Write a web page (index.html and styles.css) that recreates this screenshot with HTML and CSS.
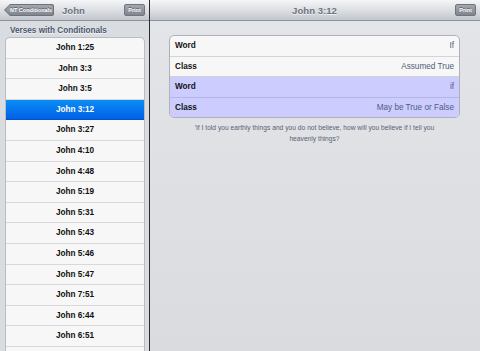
FILE: index.html
```html
<!DOCTYPE html>
<html lang="en">
<head>
    <meta charset="UTF-8">
    <meta name="viewport" content="width=device-width, initial-scale=1.0">
    <title>John 3:12 - Conditionals</title>
    <link rel="stylesheet" href="styles.css">
</head>
<body>
    <div class="split">
        <aside class="master">
            <header class="navbar">
                <div class="back-btn"><span class="back-fill">NT Conditionals</span></div>
                <h2 class="nav-title">John</h2>
                <button class="bar-btn">Print</button>
            </header>
            <div class="master-body">
                <h3 class="section-title">Verses with Conditionals</h3>
                <ul class="verse-list">
                    <li>John 1:25</li>
                    <li>John 3:3</li>
                    <li>John 3:5</li>
                    <li class="selected">John 3:12</li>
                    <li>John 3:27</li>
                    <li>John 4:10</li>
                    <li>John 4:48</li>
                    <li>John 5:19</li>
                    <li>John 5:31</li>
                    <li>John 5:43</li>
                    <li>John 5:46</li>
                    <li>John 5:47</li>
                    <li>John 7:51</li>
                    <li>John 6:44</li>
                    <li>John 6:51</li>
                    <li></li>
                </ul>
            </div>
        </aside>
        <main class="detail">
            <header class="navbar navbar-detail">
                <span class="nav-spacer"></span>
                <h1 class="nav-title">John 3:12</h1>
                <button class="bar-btn">Print</button>
            </header>
            <div class="detail-body">
                <div class="info-table">
                    <div class="info-row"><span class="label">Word</span><span class="value">If</span></div>
                    <div class="info-row"><span class="label">Class</span><span class="value">Assumed True</span></div>
                    <div class="info-row hl"><span class="label">Word</span><span class="value">if</span></div>
                    <div class="info-row hl"><span class="label">Class</span><span class="value">May be True or False</span></div>
                </div>
                <p class="verse-text">'If I told you earthly things and you do not believe, how will you believe if I tell you heavenly things?</p>
            </div>
        </main>
    </div>
</body>
</html>
```

FILE: styles.css
```css
body {
    font-family: "Liberation Sans", Arial, sans-serif;
    margin: 0;
    padding: 0;
    width: 480px;
    height: 351px;
    overflow: hidden;
    background-color: #000;
}
.split {
    display: grid;
    grid-template-columns: 150px 330px;
    height: 351px;
}
.master {
    background-color: #d9dce1;
    border-right: 1px solid #2a2c30;
    overflow: hidden;
}
.detail {
    background: linear-gradient(#e4e5e8, #d9dbdf);
    overflow: hidden;
}
.navbar {
    height: 20px;
    display: flex;
    align-items: center;
    padding: 0 4px;
    gap: 8px;
    background: linear-gradient(#f5f6f7, #dfe1e5 45%, #c2c6cd);
    border-bottom: 1px solid #8d929b;
}
.navbar-detail {
    justify-content: space-between;
}
.nav-title {
    flex: 1;
    margin: 0;
    font-size: 9.6px;
    font-weight: bold;
    color: #6e7481;
    text-shadow: 0 1px 0 rgba(255, 255, 255, 0.7);
}
.navbar-detail .nav-title {
    text-align: center;
}
.nav-spacer {
    width: 20px;
}
.bar-btn {
    font-family: inherit;
    height: 12px;
    width: 21px;
    padding: 0;
    border: 1px solid #6f747d;
    border-radius: 2px;
    background: linear-gradient(#a4a8b0, #80858f);
    color: #fff;
    font-size: 5.5px;
    font-weight: bold;
    text-shadow: 0 -1px 0 rgba(0, 0, 0, 0.4);
}
.back-btn {
    width: 50px;
    height: 12px;
    background-color: #6c717a;
    border-radius: 0 2px 2px 0;
    clip-path: polygon(6px 0, 100% 0, 100% 100%, 6px 100%, 0 50%);
    display: flex;
}
.back-fill {
    flex: 1;
    margin: 1px;
    border-radius: 0 2px 2px 0;
    clip-path: polygon(5.2px 0, 100% 0, 100% 100%, 5.2px 100%, 0 50%);
    background: linear-gradient(#a4a8b0, #80858f);
    color: #fff;
    font-size: 5.5px;
    font-weight: bold;
    line-height: 10px;
    padding-left: 5px;
    text-shadow: 0 -1px 0 rgba(0, 0, 0, 0.4);
    white-space: nowrap;
}
.master-body {
    padding: 0 4px 0 5px;
}
.section-title {
    margin: 0;
    padding: 3px 0 0 5px;
    height: 13px;
    line-height: 13px;
    font-size: 8.2px;
    color: #4c566c;
    text-shadow: 0 1px 0 rgba(255, 255, 255, 0.8);
}
.verse-list {
    list-style: none;
    margin: 0;
    padding: 0;
    background-color: #f7f7f7;
    border: 1px solid #b9bcc1;
    border-bottom: none;
    border-radius: 5px 5px 0 0;
    overflow: hidden;
}
.verse-list li {
    height: 19.6px;
    line-height: 19.6px;
    text-align: center;
    font-size: 8.2px;
    font-weight: bold;
    color: #111;
    border-bottom: 1px solid #d8d8d8;
}
.verse-list li.selected {
    background: linear-gradient(#0a8df5, #0160e6);
    border-bottom-color: #0153c9;
    color: #fff;
}
.detail-body {
    padding: 14px 20px 0 19px;
}
.info-table {
    background-color: #f7f7f7;
    border: 1px solid #aeb1b7;
    border-radius: 5px;
    overflow: hidden;
}
.info-row {
    display: flex;
    justify-content: space-between;
    align-items: center;
    height: 19.6px;
    padding: 0 5px;
    border-bottom: 1px solid #d3d4d8;
    font-size: 8.2px;
}
.info-row:last-child {
    border-bottom: none;
}
.info-row.hl {
    background-color: #ccccff;
    border-bottom-color: #b6b6e4;
}
.label {
    font-weight: bold;
    color: #111;
}
.value {
    color: #4f5c7c;
}
.verse-text {
    margin: 5px 18px 0;
    text-align: center;
    font-size: 6.7px;
    line-height: 10.5px;
    color: #596172;
}
```
